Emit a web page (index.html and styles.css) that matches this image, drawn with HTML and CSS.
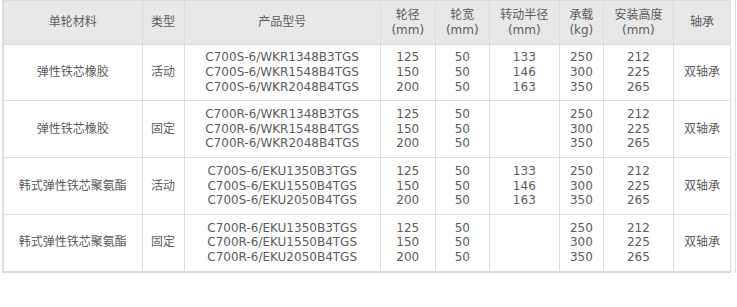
FILE: index.html
```html
<!DOCTYPE html>
<html lang="zh">
<head>
<meta charset="utf-8">
<link rel="stylesheet" href="styles.css">
</head>
<body>
<div class="wrap">
<table class="spec">
<colgroup>
<col class="c1"><col class="c2"><col class="c3"><col class="c4"><col class="c5"><col class="c6"><col class="c7"><col class="c8"><col class="c9">
</colgroup>
<thead>
<tr class="head">
<th>单轮材料</th><th>类型</th><th>产品型号</th><th>轮径<br>(mm)</th><th>轮宽<br>(mm)</th><th>转动半径<br>(mm)</th><th>承载<br>(kg)</th><th>安装高度<br>(mm)</th><th>轴承</th>
</tr>
</thead>
<tbody>
<tr class="r1">
<td>弹性铁芯橡胶</td><td>活动</td><td>C700S-6/WKR1348B3TGS<br>C700S-6/WKR1548B4TGS<br>C700S-6/WKR2048B4TGS</td><td>125<br>150<br>200</td><td>50<br>50<br>50</td><td>133<br>146<br>163</td><td>250<br>300<br>350</td><td>212<br>225<br>265</td><td>双轴承</td>
</tr>
<tr class="r2">
<td>弹性铁芯橡胶</td><td>固定</td><td>C700R-6/WKR1348B3TGS<br>C700R-6/WKR1548B4TGS<br>C700R-6/WKR2048B4TGS</td><td>125<br>150<br>200</td><td>50<br>50<br>50</td><td></td><td>250<br>300<br>350</td><td>212<br>225<br>265</td><td>双轴承</td>
</tr>
<tr class="r2">
<td>韩式弹性铁芯聚氨酯</td><td>活动</td><td>C700S-6/EKU1350B3TGS<br>C700S-6/EKU1550B4TGS<br>C700S-6/EKU2050B4TGS</td><td>125<br>150<br>200</td><td>50<br>50<br>50</td><td>133<br>146<br>163</td><td>250<br>300<br>350</td><td>212<br>225<br>265</td><td>双轴承</td>
</tr>
<tr class="r2">
<td>韩式弹性铁芯聚氨酯</td><td>固定</td><td>C700R-6/EKU1350B3TGS<br>C700R-6/EKU1550B4TGS<br>C700R-6/EKU2050B4TGS</td><td>125<br>150<br>200</td><td>50<br>50<br>50</td><td></td><td>250<br>300<br>350</td><td>212<br>225<br>265</td><td>双轴承</td>
</tr>
</tbody>
</table>
</div>
</body>
</html>
```
FILE: styles.css
```css
html, body {
  margin: 0;
  padding: 0;
  background: #fff;
}
.wrap {
  width: 733px;
  height: 273px;
  padding-left: 2px;
  border-right: 1px solid #dcdcdc;
}
.spec {
  width: 729px;
  table-layout: fixed;
  border-collapse: collapse;
  border-left: 2px solid #dcdcdc;
  border-bottom: 2px solid #dcdcdc;
  font-family: "DejaVu Sans", "Noto Sans CJK SC", sans-serif;
  font-size: 12px;
  line-height: 14.7px;
  color: #5c5c5c;
}
.c1 { width: 139px; }
.c2 { width: 42px; }
.c3 { width: 196px; }
.c4 { width: 55px; }
.c5 { width: 54px; }
.c6 { width: 70px; }
.c7 { width: 44px; }
.c8 { width: 70px; }
.c9 { width: 57px; }
.spec th,
.spec td {
  border: 1px solid #dcdcdc;
  padding: 0;
  text-align: center;
  vertical-align: middle;
  font-weight: normal;
}
.spec th {
  background: #e8e8e8;
}
.head { height: 44px; }
.r1 { height: 56px; }
.r2 { height: 57px; }
```
